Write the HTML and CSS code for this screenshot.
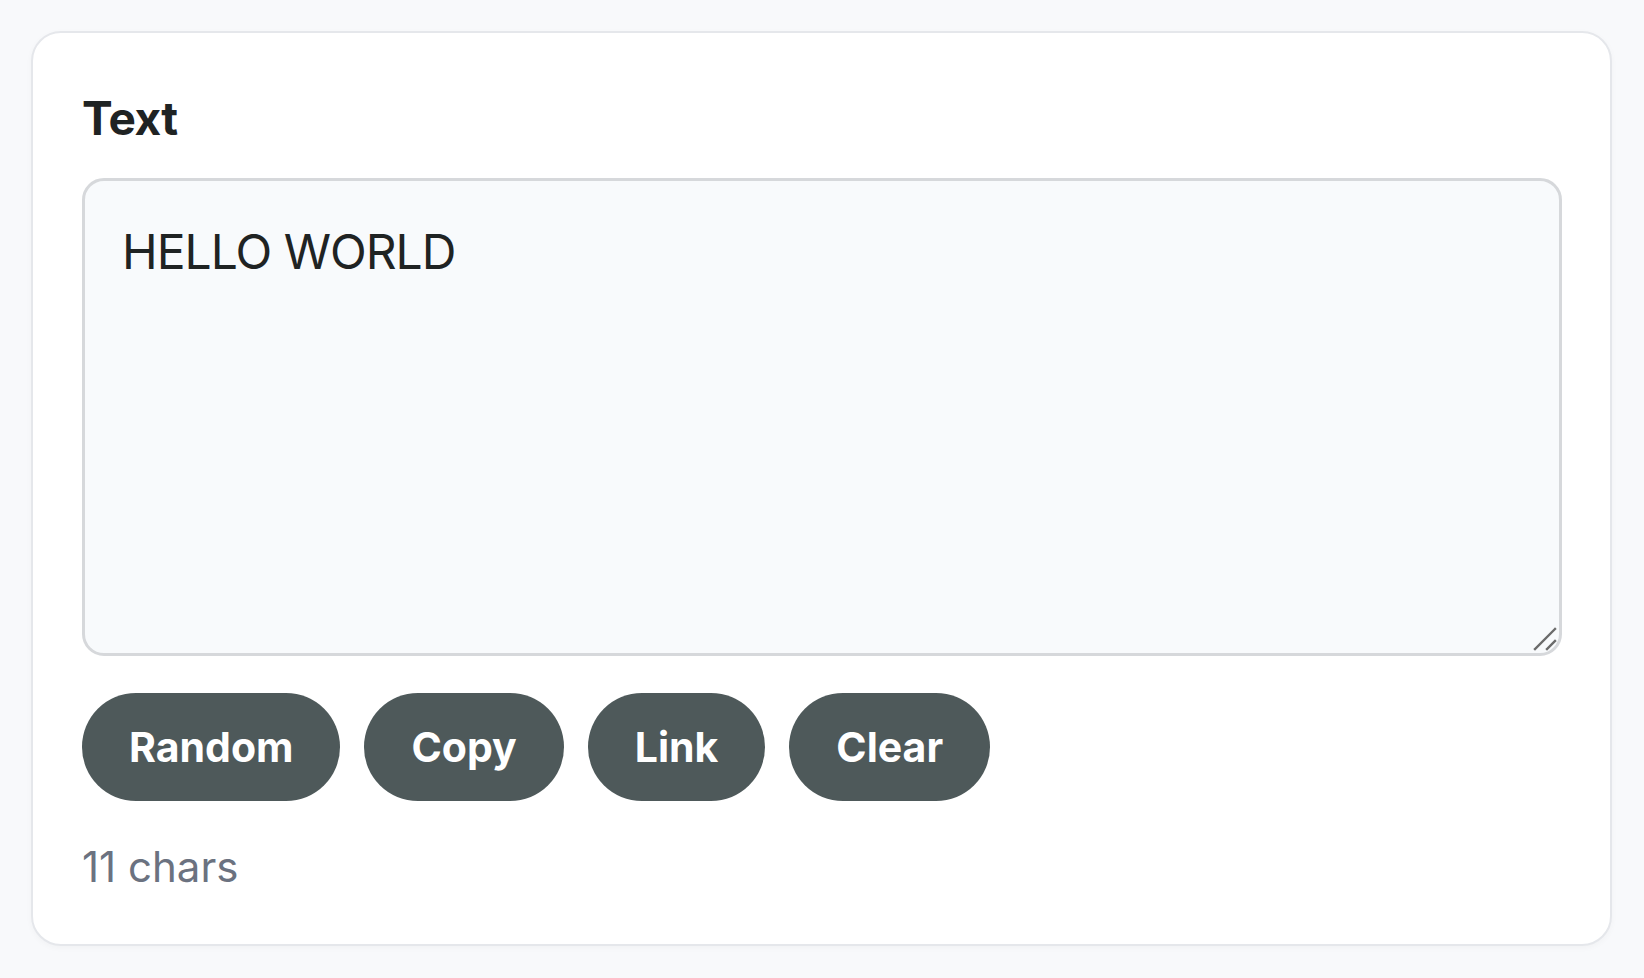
FILE: index.html
```html
<!DOCTYPE html>
<html lang="en">
<head>
<meta charset="utf-8">
<title>Text</title>
<link rel="stylesheet" href="styles.css">
</head>
<body>
<main class="card">
  <label class="label" for="txt">Text</label>
  <div class="field">
    <textarea id="txt" class="input">HELLO WORLD</textarea>
    <svg class="grip" width="26" height="26" viewBox="0 0 26 26" aria-hidden="true">
      <path d="M3 24 L23 4 M15 24 L23 16" stroke="#6b6b6b" stroke-width="2.4" stroke-linecap="square" fill="none"/>
    </svg>
  </div>
  <div class="actions">
    <button class="btn">Random</button>
    <button class="btn">Copy</button>
    <button class="btn">Link</button>
    <button class="btn">Clear</button>
  </div>
  <div class="count">11 chars</div>
</main>
</body>
</html>
```
FILE: styles.css
```css
html, body {
  margin: 0;
  padding: 0;
}
body {
  background: #f8f9fb;
  padding: 31px 32px 32px 31px;
  font-family: Inter, "Liberation Sans", sans-serif;
  box-sizing: border-box;
  min-height: 100vh;
}
.card {
  display: flex;
  flex-direction: column;
  align-items: flex-start;
  background: #ffffff;
  border: 2px solid #e5e7eb;
  border-radius: 30px;
  padding: 49px 48px 46px 49px;
  box-shadow: 0 2px 6px rgba(0, 0, 0, 0.03);
}
.label {
  font-size: 46px;
  font-weight: 700;
  line-height: 72px;
  letter-spacing: -0.6px;
  color: #1f2323;
}
.field {
  position: relative;
  margin-top: 24px;
  width: 100%;
  height: 478px;
}
.input {
  display: block;
  width: 100%;
  height: 100%;
  box-sizing: border-box;
  border: 3px solid #d6d8db;
  border-radius: 22px;
  background: #f8fafc;
  padding: 35px 37px;
  font-family: Inter, "Liberation Sans", sans-serif;
  font-size: 48px;
  line-height: 72px;
  letter-spacing: -1px;
  color: #1f2323;
  resize: none;
  outline: none;
}
.grip {
  position: absolute;
  right: 4px;
  bottom: 5px;
}
.actions {
  display: flex;
  gap: 24px;
  margin-top: 37px;
}
.btn {
  border: 0;
  border-radius: 999px;
  background: #4e595a;
  color: #ffffff;
  font-family: Inter, "Liberation Sans", sans-serif;
  font-size: 41px;
  font-weight: 700;
  line-height: 60px;
  padding: 24px 47px;
}
.count {
  margin-top: 34px;
  font-size: 42px;
  line-height: 63px;
  color: #6b7280;
}
```
